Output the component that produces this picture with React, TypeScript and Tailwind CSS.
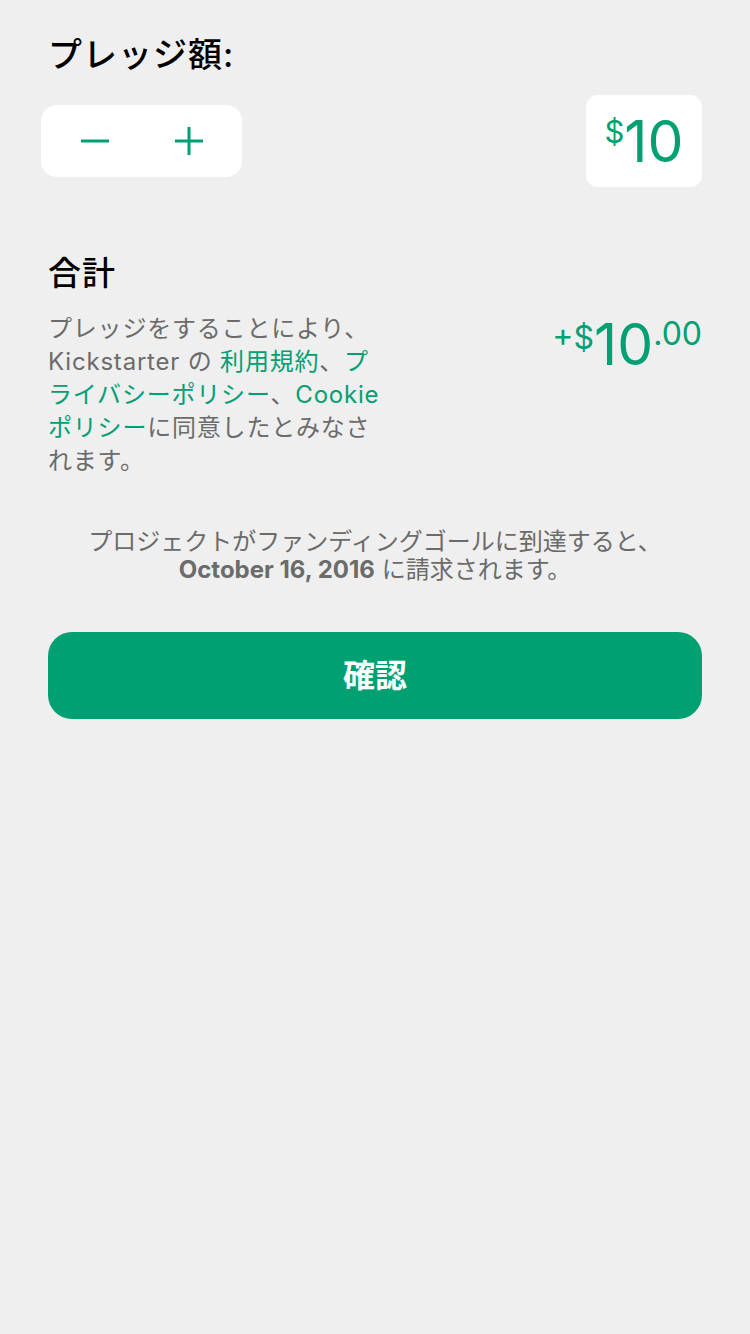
const jp = { fontFamily: 'Inter, "Noto Sans CJK JP", sans-serif' }
const num = { fontFamily: 'Inter, "Noto Sans CJK JP", sans-serif' }

function Minus() {
  return (
    <svg width="28" height="28" viewBox="0 0 28 28" fill="none" stroke="#00a073" strokeWidth="3">
      <path d="M0 14h28" />
    </svg>
  )
}

function Plus() {
  return (
    <svg width="28" height="28" viewBox="0 0 28 28" fill="none" stroke="#00a073" strokeWidth="3">
      <path d="M0 14h28M14 0v28" />
    </svg>
  )
}

export default function App() {
  return (
    <div className="min-h-[1334px] w-[750px] bg-[#efefef] px-12 pt-[33px]" style={jp}>
      <h1 className="text-[34px] leading-[44px] font-medium tracking-[1px] text-black">プレッジ額:</h1>

      <div className="mt-[18px] flex items-start justify-between">
        <div className="-ml-[7px] mt-[10px] flex h-[72px] w-[201px] items-center gap-[66px] rounded-[16px] bg-white pl-[40px]">
          <button className="flex h-7 w-7 items-center justify-center"><Minus /></button>
          <button className="flex h-7 w-7 items-center justify-center"><Plus /></button>
        </div>
        <div className="flex h-[92px] w-[116px] items-center justify-center rounded-[12px] bg-white text-[#00a073]" style={num}>
          <span className="-mt-[20px] text-[31px] leading-none">$</span>
          <span className="text-[57px] leading-none">10</span>
        </div>
      </div>

      <h2 className="mt-[65px] text-[33px] leading-[42px] font-medium tracking-[1px] text-black">合計</h2>

      <div className="mt-[18px] flex items-start justify-between">
        <p className="w-[360px] text-[24px] leading-[33px] tracking-[0.8px] text-[#6b6b6b]">
          プレッジをすることにより、<br />
          Kickstarter の <span className="text-[#00a073]">利用規約</span>、<span className="text-[#00a073]">プ<br />ライバシーポリシー</span>、<span className="text-[#00a073]">Cookie<br />ポリシー</span>に同意したとみなさ<br />れます。
        </p>
        <div className="mt-[4px] flex items-start text-[#00a073]" style={num}>
          <span className="mt-[6px] text-[32px] leading-none">+$</span>
          <span className="text-[57px] leading-none">10</span>
          <span className="mt-[2px] text-[32px] leading-none">.00</span>
        </div>
      </div>

      <p className="mt-[51px] text-center text-[24px] leading-[28px] text-[#6b6b6b]">
        プロジェクトがファンディングゴールに到達すると、<br />
        <span className="font-bold">October 16, 2016</span> に請求されます。
      </p>

      <button className="mt-[48px] flex h-[87px] w-full items-center justify-center rounded-[24px] bg-[#00a073] text-[32px] font-bold text-white">
        確認
      </button>
    </div>
  )
}
